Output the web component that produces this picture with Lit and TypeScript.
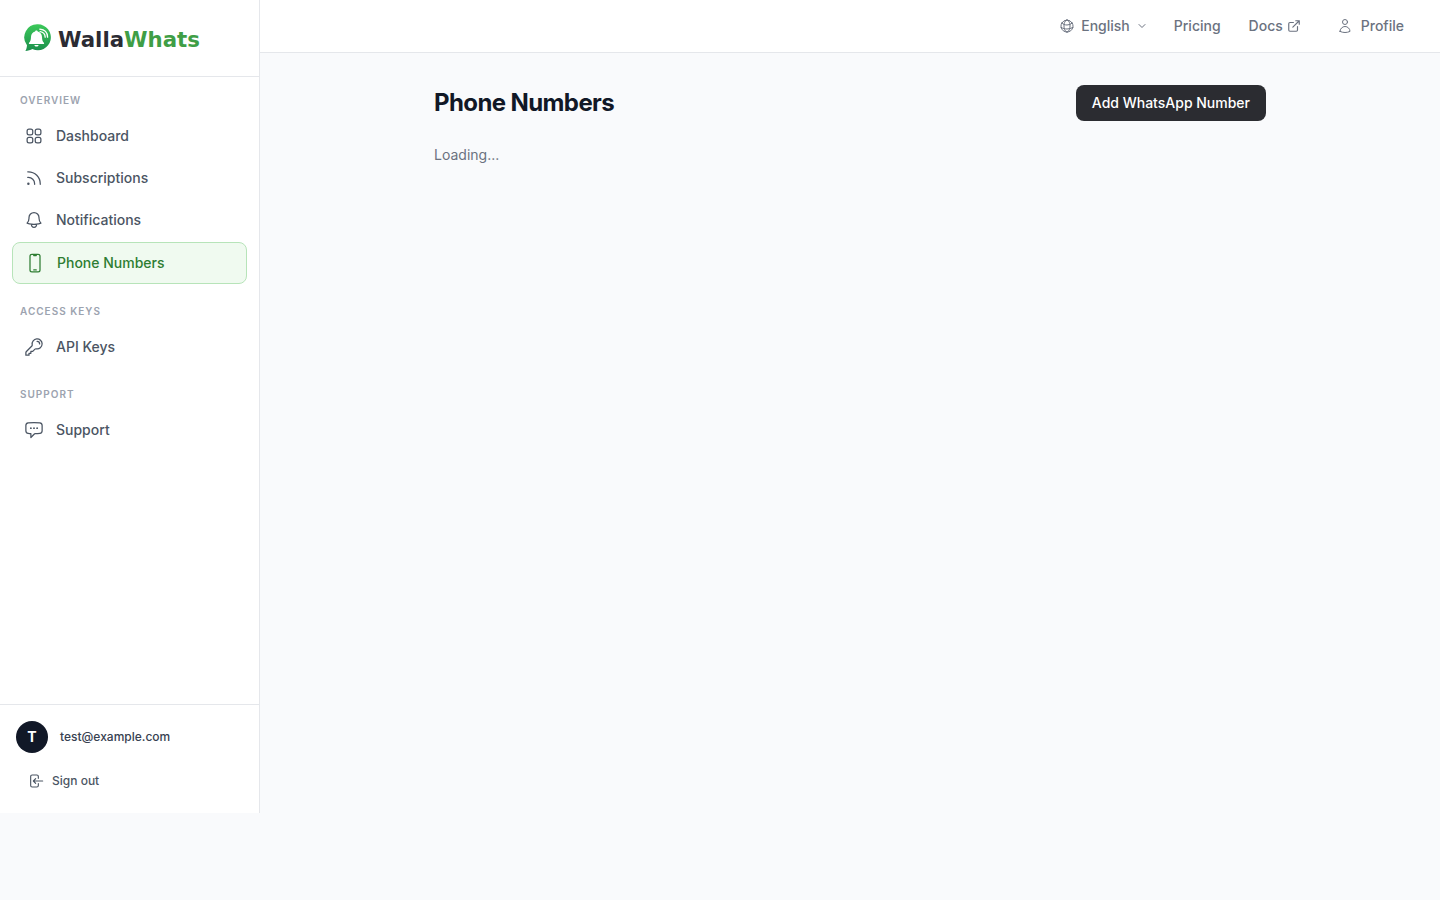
import { LitElement, html, css, svg } from "lit";
import { customElement, property, state } from "lit/decorators.js";
import { classMap } from "lit/directives/class-map.js";

const ICONS: Record<string, string> = {
  dashboard:
    "M3.75 6A2.25 2.25 0 0 1 6 3.75h2.25A2.25 2.25 0 0 1 10.5 6v2.25a2.25 2.25 0 0 1-2.25 2.25H6a2.25 2.25 0 0 1-2.25-2.25V6ZM3.75 15.75A2.25 2.25 0 0 1 6 13.5h2.25a2.25 2.25 0 0 1 2.25 2.25V18a2.25 2.25 0 0 1-2.25 2.25H6A2.25 2.25 0 0 1 3.75 18v-2.25ZM13.5 6a2.25 2.25 0 0 1 2.25-2.25H18A2.25 2.25 0 0 1 20.25 6v2.25A2.25 2.25 0 0 1 18 10.5h-2.25a2.25 2.25 0 0 1-2.25-2.25V6ZM13.5 15.75a2.25 2.25 0 0 1 2.25-2.25H18a2.25 2.25 0 0 1 2.25 2.25V18A2.25 2.25 0 0 1 18 20.25h-2.25A2.25 2.25 0 0 1 13.5 18v-2.25Z",
  rss: "M12.75 19.5v-.75a7.5 7.5 0 0 0-7.5-7.5H4.5m0-6.75h.75c7.87 0 14.25 6.38 14.25 14.25v.75M6 18.75a.75.75 0 1 1-1.5 0 .75.75 0 0 1 1.5 0Z",
  bell: "M14.857 17.082a23.848 23.848 0 0 0 5.454-1.31A8.967 8.967 0 0 1 18 9.75V9A6 6 0 0 0 6 9v.75a8.967 8.967 0 0 1-2.312 6.022c1.733.64 3.56 1.085 5.455 1.31m5.714 0a24.255 24.255 0 0 1-5.714 0m5.714 0a3 3 0 1 1-5.714 0",
  phone:
    "M10.5 1.5H8.25A2.25 2.25 0 0 0 6 3.75v16.5a2.25 2.25 0 0 0 2.25 2.25h7.5A2.25 2.25 0 0 0 18 20.25V3.75a2.25 2.25 0 0 0-2.25-2.25H13.5m-3 0V3h3V1.5m-3 0h3m-3 18.75h3",
  key: "M15.75 5.25a3 3 0 0 1 3 3m3 0a6 6 0 0 1-7.029 5.912c-.563-.097-1.159.026-1.563.43L10.5 17.25H8.25v2.25H6v2.25H2.25v-2.818c0-.597.237-1.17.659-1.591l6.499-6.499c.404-.404.527-1 .43-1.563A6 6 0 1 1 21.75 8.25Z",
  chat: "M8.625 9.75a.375.375 0 1 1-.75 0 .375.375 0 0 1 .75 0Zm0 0H8.25m4.125 0a.375.375 0 1 1-.75 0 .375.375 0 0 1 .75 0Zm0 0H12m4.125 0a.375.375 0 1 1-.75 0 .375.375 0 0 1 .75 0Zm0 0h-.375m-13.5 3.01c0 1.6 1.123 2.994 2.707 3.227 1.087.16 2.185.283 3.293.369V21l4.184-4.183a1.14 1.14 0 0 1 .778-.332 48.294 48.294 0 0 0 5.83-.498c1.585-.233 2.708-1.626 2.708-3.228V6.741c0-1.602-1.123-2.995-2.707-3.228A48.394 48.394 0 0 0 12 3c-2.392 0-4.744.175-7.043.513C3.373 3.746 2.25 5.14 2.25 6.741v6.018Z",
  signOut:
    "M15.5 8V5.250A2.250 2.250 0 0 0 13.250 3h-7A2.250 2.250 0 0 0 4 5.250v13.500A2.250 2.250 0 0 0 6.250 21h7a2.250 2.250 0 0 0 2.250-2.250V16M11.500 8.500 8 12l3.500 3.500M8 12h14",
  globe:
    "M12 21a9.004 9.004 0 0 0 8.716-6.747M12 21a9.004 9.004 0 0 1-8.716-6.747M12 21c2.485 0 4.5-4.03 4.5-9S14.485 3 12 3m0 18c-2.485 0-4.5-4.03-4.5-9S9.515 3 12 3m0 0a8.997 8.997 0 0 1 7.843 4.582M12 3a8.997 8.997 0 0 0-7.843 4.582m15.686 0A11.953 11.953 0 0 1 12 10.5c-2.998 0-5.74-1.1-7.843-2.918m15.686 0A8.959 8.959 0 0 1 21 12c0 .778-.099 1.533-.284 2.253m0 0A17.919 17.919 0 0 1 12 16.5c-3.162 0-6.133-.815-8.716-2.247m0 0A9.015 9.015 0 0 1 3 12c0-1.605.42-3.113 1.157-4.418",
  chevron: "m6 9 6 6 6-6",
  external: "M18 13v6a2 2 0 0 1-2 2H5a2 2 0 0 1-2-2V8a2 2 0 0 1 2-2h6M15 3h6v6M10 14 21 3",
  user: "M15.75 6a3.75 3.75 0 1 1-7.5 0 3.75 3.75 0 0 1 7.5 0ZM4.501 20.118a7.5 7.5 0 0 1 14.998 0A17.933 17.933 0 0 1 12 21.75c-2.676 0-5.216-.584-7.499-1.632Z",
};

@customElement("line-icon")
export class LineIcon extends LitElement {
  @property() name = "";
  @property({ type: Number }) weight = 1.5;

  static styles = css`
    :host {
      display: block;
      flex: none;
      width: 20px;
      height: 20px;
    }
    .glyph {
      display: block;
      width: 100%;
      height: 100%;
      fill: none;
      stroke: currentColor;
      stroke-linecap: round;
      stroke-linejoin: round;
    }
  `;

  render() {
    return html`<svg class="glyph" viewBox="0 0 24 24" stroke-width=${this.weight} aria-hidden="true">
      ${svg`<path d=${ICONS[this.name] ?? ""}></path>`}
    </svg>`;
  }
}

interface NavItem {
  icon: string;
  label: string;
}

const GROUPS: { title: string; items: NavItem[] }[] = [
  {
    title: "Overview",
    items: [
      { icon: "dashboard", label: "Dashboard" },
      { icon: "rss", label: "Subscriptions" },
      { icon: "bell", label: "Notifications" },
      { icon: "phone", label: "Phone Numbers" },
    ],
  },
  { title: "Access Keys", items: [{ icon: "key", label: "API Keys" }] },
  { title: "Support", items: [{ icon: "chat", label: "Support" }] },
];

@customElement("side-bar")
export class SideBar extends LitElement {
  @property() current = "";
  @property() email = "";

  static styles = css`
    :host {
      display: flex;
      flex-direction: column;
      box-sizing: border-box;
      flex: none;
      width: 260px;
      min-height: calc(100vh - 87px);
      background: #ffffff;
      border-right: 1px solid #e5e7eb;
    }
    .brand {
      display: block;
      padding: 24px;
      border-bottom: 1px solid #e5e7eb;
    }
    .logo {
      display: block;
      width: 180px;
      height: 28px;
    }
    .wordmark {
      font-family: "DejaVu Sans", sans-serif;
      font-size: 21.3px;
      font-weight: 700;
      fill: #2b2b33;
    }
    .accent {
      fill: #3f9e46;
    }
    .nav {
      flex: 1;
      display: flex;
      flex-direction: column;
      gap: 20px;
      padding: 16px 12px;
    }
    .group-title {
      margin: 0 0 8px;
      padding: 0 8px;
      font-size: 10px;
      line-height: 15px;
      font-weight: 600;
      letter-spacing: 1px;
      text-transform: uppercase;
      color: #9ca3af;
    }
    .list {
      display: flex;
      flex-direction: column;
      gap: 2px;
      margin: 0;
      padding: 0;
      list-style: none;
    }
    .item {
      display: flex;
      align-items: center;
      gap: 12px;
      padding: 10px 12px;
      border-radius: 8px;
      font-size: 14px;
      line-height: 20px;
      font-weight: 500;
      color: #4b5563;
      text-decoration: none;
    }
    .item.active {
      color: #2e7d32;
      background: #f0faf0;
      border: 1px solid #b7e4b9;
    }
    .account {
      padding: 16px;
      border-top: 1px solid #e5e7eb;
    }
    .who {
      display: flex;
      align-items: center;
      gap: 12px;
      margin-bottom: 12px;
      font-size: 12px;
      line-height: 16px;
      font-weight: 500;
      color: #374151;
    }
    .avatar {
      display: grid;
      place-items: center;
      width: 32px;
      height: 32px;
      border-radius: 50%;
      background: #111827;
      color: #ffffff;
      font-size: 14px;
      font-weight: 700;
    }
    .sign-out {
      display: flex;
      align-items: center;
      gap: 8px;
      width: 100%;
      padding: 8px 12px;
      border: 0;
      border-radius: 6px;
      background: none;
      font: inherit;
      font-size: 12px;
      line-height: 16px;
      font-weight: 500;
      color: #4b5563;
      cursor: pointer;
    }
    .small {
      width: 16px;
      height: 16px;
    }
  `;

  render() {
    return html`
      <a class="brand" href="#home">
        <svg class="logo" viewBox="0 0 180 28" role="img" aria-label="WallaWhats">
          <defs>
            <linearGradient id="leaf" x1="0" y1="0" x2="0" y2="1">
              <stop offset="0" stop-color="#3cc95a"></stop>
              <stop offset="1" stop-color="#1c8f4c"></stop>
            </linearGradient>
          </defs>
          <path
            fill="url(#leaf)"
            d="M14 .3a13 13 0 1 1-5.600 24.800C6.600 26.200 4 27 1.300 27c1-1.400 1.500-3.200 1.700-5.800A13 13 0 0 1 14 .3Z"
          ></path>
          <path
            fill="#ffffff"
            d="M12.400 6.400c.7 0 1.200.4 1.300 1 2.700.7 4.200 2.700 4.300 5.600.1 3 .6 4.500 1.900 5.700.5.500.3 1.300-.5 1.300H5.600c-.8 0-1-.8-.5-1.300 1.300-1.200 1.800-2.700 1.900-5.700.1-2.900 1.500-4.900 4.100-5.600.1-.6.6-1 1.300-1ZM10.400 20.900h4.200c-.2 1-1 1.600-2.100 1.600s-1.900-.6-2.100-1.600Z"
          ></path>
          <path
            fill="none"
            stroke="#ffffff"
            stroke-width="1.3"
            stroke-linecap="round"
            d="M15.800 5.200c4.700.3 7.600 3.400 7.800 8M16.100 7.700c3.100.4 5 2.400 5.100 5.500"
          ></path>
          <text class="wordmark" x="34" y="23">Walla<tspan class="accent">Whats</tspan></text>
        </svg>
      </a>
      <nav class="nav" aria-label="Main">
        ${GROUPS.map(
          (group) => html`<section>
            <h2 class="group-title">${group.title}</h2>
            <ul class="list">
              ${group.items.map(
                (item) => html`<li>
                  <a
                    class=${classMap({ item: true, active: item.label === this.current })}
                    href="#${item.icon}"
                  >
                    <line-icon name=${item.icon}></line-icon>${item.label}
                  </a>
                </li>`
              )}
            </ul>
          </section>`
        )}
      </nav>
      <div class="account">
        <div class="who">
          <span class="avatar">${this.email.charAt(0).toUpperCase()}</span>
          <span>${this.email}</span>
        </div>
        <button class="sign-out" type="button">
          <line-icon class="small" name="signOut" weight="1.7"></line-icon>Sign out
        </button>
      </div>
    `;
  }
}

@customElement("top-bar")
export class TopBar extends LitElement {
  static styles = css`
    :host {
      display: flex;
      justify-content: flex-end;
      align-items: center;
      padding: 8px 24px;
      background: #ffffff;
      border-bottom: 1px solid #e5e7eb;
    }
    .links {
      display: flex;
      align-items: center;
      gap: 4px;
    }
    .link {
      display: flex;
      align-items: center;
      gap: 6px;
      padding: 8px 12px;
      border: 0;
      background: none;
      font: inherit;
      font-size: 14px;
      line-height: 20px;
      font-weight: 500;
      color: #6b7280;
      text-decoration: none;
      cursor: pointer;
    }
    .language {
      padding-right: 10px;
    }
    .docs {
      gap: 4px;
    }
    .profile {
      gap: 8px;
      margin-left: 8px;
    }
    .icon {
      width: 16px;
      height: 16px;
    }
    .external {
      width: 14px;
      height: 14px;
    }
    .chevron {
      width: 12px;
      height: 12px;
    }
  `;

  render() {
    return html`<nav class="links" aria-label="Site">
      <button class="link language" type="button" aria-haspopup="true">
        <line-icon class="icon" name="globe"></line-icon>English
        <line-icon class="chevron" name="chevron" weight="2"></line-icon>
      </button>
      <a class="link" href="#pricing">Pricing</a>
      <a class="link docs" href="#docs"
        >Docs<line-icon class="external" name="external" weight="2"></line-icon
      ></a>
      <a class="link profile" href="#profile"><line-icon class="icon" name="user"></line-icon>Profile</a>
    </nav>`;
  }
}

@customElement("app-root")
export class AppRoot extends LitElement {
  @state() private loading = true;

  static styles = css`
    :host {
      display: flex;
      align-items: flex-start;
      min-height: 100vh;
      background: #f9fafc;
      font-family: Inter, sans-serif;
      color: #111827;
    }
    .page {
      flex: 1;
      min-width: 0;
    }
    .content {
      box-sizing: border-box;
      max-width: 896px;
      margin: 0 auto;
      padding: 32px;
    }
    .heading {
      display: flex;
      align-items: center;
      justify-content: space-between;
      margin-bottom: 24px;
    }
    .title {
      margin: 0;
      font-size: 24px;
      line-height: 32px;
      font-weight: 700;
      letter-spacing: -0.025em;
    }
    .add {
      padding: 8px 16px;
      border: 0;
      border-radius: 8px;
      background: #2b2c31;
      color: #ffffff;
      font: inherit;
      font-size: 14px;
      line-height: 20px;
      font-weight: 500;
      cursor: pointer;
    }
    .status {
      margin: 0;
      font-size: 14px;
      line-height: 20px;
      color: #6b7280;
    }
  `;

  render() {
    return html`
      <side-bar current="Phone Numbers" email="test@example.com"></side-bar>
      <div class="page">
        <top-bar></top-bar>
        <main class="content">
          <header class="heading">
            <h1 class="title">Phone Numbers</h1>
            <button class="add" type="button">Add WhatsApp Number</button>
          </header>
          ${this.loading ? html`<p class="status" role="status">Loading...</p>` : null}
        </main>
      </div>
    `;
  }
}
